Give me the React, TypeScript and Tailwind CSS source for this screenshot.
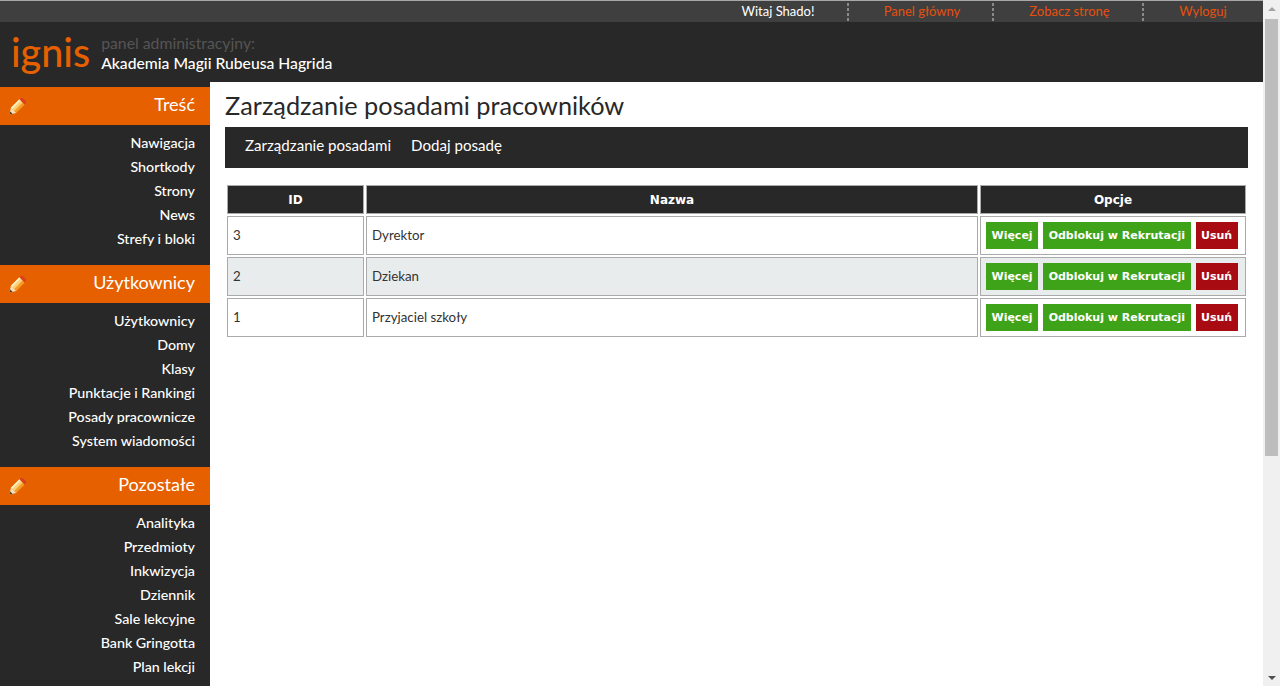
const lato = "font-['Lato',sans-serif]"

const menu = [
	{ title: "Treść", items: ["Nawigacja", "Shortkody", "Strony", "News", "Strefy i bloki"] },
	{ title: "Użytkownicy", items: ["Użytkownicy", "Domy", "Klasy", "Punktacje i Rankingi", "Posady pracownicze", "System wiadomości"] },
	{ title: "Pozostałe", items: ["Analityka", "Przedmioty", "Inkwizycja", "Dziennik", "Sale lekcyjne", "Bank Gringotta", "Plan lekcji"] },
]

const rows = [
	{ id: 3, name: "Dyrektor" },
	{ id: 2, name: "Dziekan" },
	{ id: 1, name: "Przyjaciel szkoły" },
]

function Pencil() {
	return (
		<svg width="17" height="17" viewBox="0 0 16 16" className="mt-[3px] shrink-0">
			<path d="M1.8 9.2L9.8 1.2l5 5-8 8z" fill="#f59a23" />
			<path d="M1.8 9.2L9.8 1.2l3 3-8 8z" fill="#fcd078" />
			<path d="M1.8 9.2L9.8 1.2l1.2 1.2-8 8z" fill="#fff0c4" />
			<path d="M9.8 1.2l1-.8c.8-.6 2-.5 2.8.2l1.8 1.8c.7.8.8 2 .2 2.8l-.8 1z" fill="#d8401f" />
			<path d="M1.8 9.2l5 5L.4 15.6z" fill="#f6dfb4" />
			<path d="M.4 15.6l.7-2.9 2.2 2.2z" fill="#4b3a24" />
		</svg>
	)
}

function Sep() {
	return (
		<span className="flex w-[2px] flex-col gap-[2px]">
			<i className="h-[3px] bg-[#8a8a8a]" />
			<i className="h-[3px] bg-[#8a8a8a]" />
			<i className="h-[3px] bg-[#8a8a8a]" />
			<i className="h-[3px] bg-[#8a8a8a]" />
		</span>
	)
}

function Btn({ label, red }: { label: string; red?: boolean }) {
	return (
		<a
			className={
				"inline-block h-[27px] px-[5.5px] text-[11px] leading-[27px] font-bold text-white font-['DejaVu_Sans',sans-serif] " +
				(red ? "bg-[#a90b13]" : "bg-[#3fa31a]")
			}
		>
			{label}
		</a>
	)
}

const th = "h-[29px] border border-[#aaaaaa] bg-[#282828] p-0 text-[12px] font-bold text-white font-['DejaVu_Sans',sans-serif]"
const td = "h-[39px] border border-[#aaaaaa] bg-inherit px-[5px] py-0"

export default function App() {
	return (
		<div className={`flex h-[686px] overflow-hidden bg-white ${lato}`}>
			<div className="flex min-w-0 flex-1 flex-col">
				<div className="flex h-[22px] shrink-0 items-center justify-end border-t border-[#a8a8a8] bg-[#3f3f3f] pr-[1px] text-[13px]">
					<span className="w-[138px] text-center text-white">Witaj Shado!</span>
					<Sep />
					<a className="w-[143px] pl-[3px] text-center text-[#e6500f]">Panel główny</a>
					<Sep />
					<a className="w-[148px] pl-[3px] text-center text-[#e6500f]">Zobacz stronę</a>
					<Sep />
					<a className="w-[118px] text-center text-[#e6500f]">Wyloguj</a>
				</div>
				<div className="flex h-[60px] shrink-0 items-center bg-[#282828] pl-[11px]">
					<span className="text-[39.5px] leading-none font-medium text-[#e66000]">ignis</span>
					<div className="mt-[1px] ml-[11px] flex flex-col">
						<span className="text-[15.8px] leading-[20px] text-[#555555]">panel administracyjny:</span>
						<span className="text-[15.7px] leading-[20px] font-medium text-white">Akademia Magii Rubeusa Hagrida</span>
					</div>
				</div>
				<div className="flex min-h-0 flex-1">
					<nav className="w-[210px] shrink-0 bg-[#282828] pt-[5px]">
						{menu.map((s) => (
							<div key={s.title} className="mb-[14px]">
								<div className="flex h-[38px] items-center justify-between bg-[#e66000] pr-[15px] pb-[3px] pl-[9px] text-[18px] text-white">
									<Pencil />
									<span>{s.title}</span>
								</div>
								<ul className="pt-[6px]">
									{s.items.map((i) => (
										<li key={i} className="h-[24px] pr-[15px] text-right text-[14.25px] leading-[24px] font-medium text-white">
											{i}
										</li>
									))}
								</ul>
							</div>
						))}
					</nav>
					<main className="min-w-0 flex-1 pr-[15px] pl-[15px]">
						<h1 className="h-[45px] text-[25.3px] leading-[46px] text-[#282828]">Zarządzanie posadami pracowników</h1>
						<div className="flex h-[41px] gap-[20px] bg-[#282828] pl-[20px] text-[15.1px] leading-[37px] text-white">
							<a>Zarządzanie posadami</a>
							<a>Dodaj posadę</a>
						</div>
						<table className="mt-[15px] w-full border-separate border-spacing-[2px] text-[13.3px] text-[#333333]">
							<thead>
								<tr>
									<th className={`w-[137px] ${th}`}>ID</th>
									<th className={th}>Nazwa</th>
									<th className={`w-[266px] ${th}`}>Opcje</th>
								</tr>
							</thead>
							<tbody>
								{rows.map((r, n) => (
									<tr key={r.id} className={n === 1 ? "bg-[#e9eced]" : "bg-white"}>
										<td className={td}>{r.id}</td>
										<td className={td}>{r.name}</td>
										<td className={td}>
											<div className="flex gap-[5px]">
												<Btn label="Więcej" />
												<Btn label="Odblokuj w Rekrutacji" />
												<Btn label="Usuń" red />
											</div>
										</td>
									</tr>
								))}
							</tbody>
						</table>
					</main>
				</div>
			</div>
			<div className="flex w-[17px] shrink-0 flex-col bg-[#f0f0f0]">
				<div className="flex h-[17px] items-center justify-center">
					<span className="border-x-[4px] border-b-[4px] border-x-transparent border-b-[#a3a3a3]" />
				</div>
				<div className="mx-[2px] mt-[2px] h-[437px] bg-[#bdbdbd]" />
				<div className="flex-1" />
				<div className="flex h-[17px] items-center justify-center">
					<span className="border-x-[4px] border-t-[4px] border-x-transparent border-t-[#505050]" />
				</div>
			</div>
		</div>
	)
}
